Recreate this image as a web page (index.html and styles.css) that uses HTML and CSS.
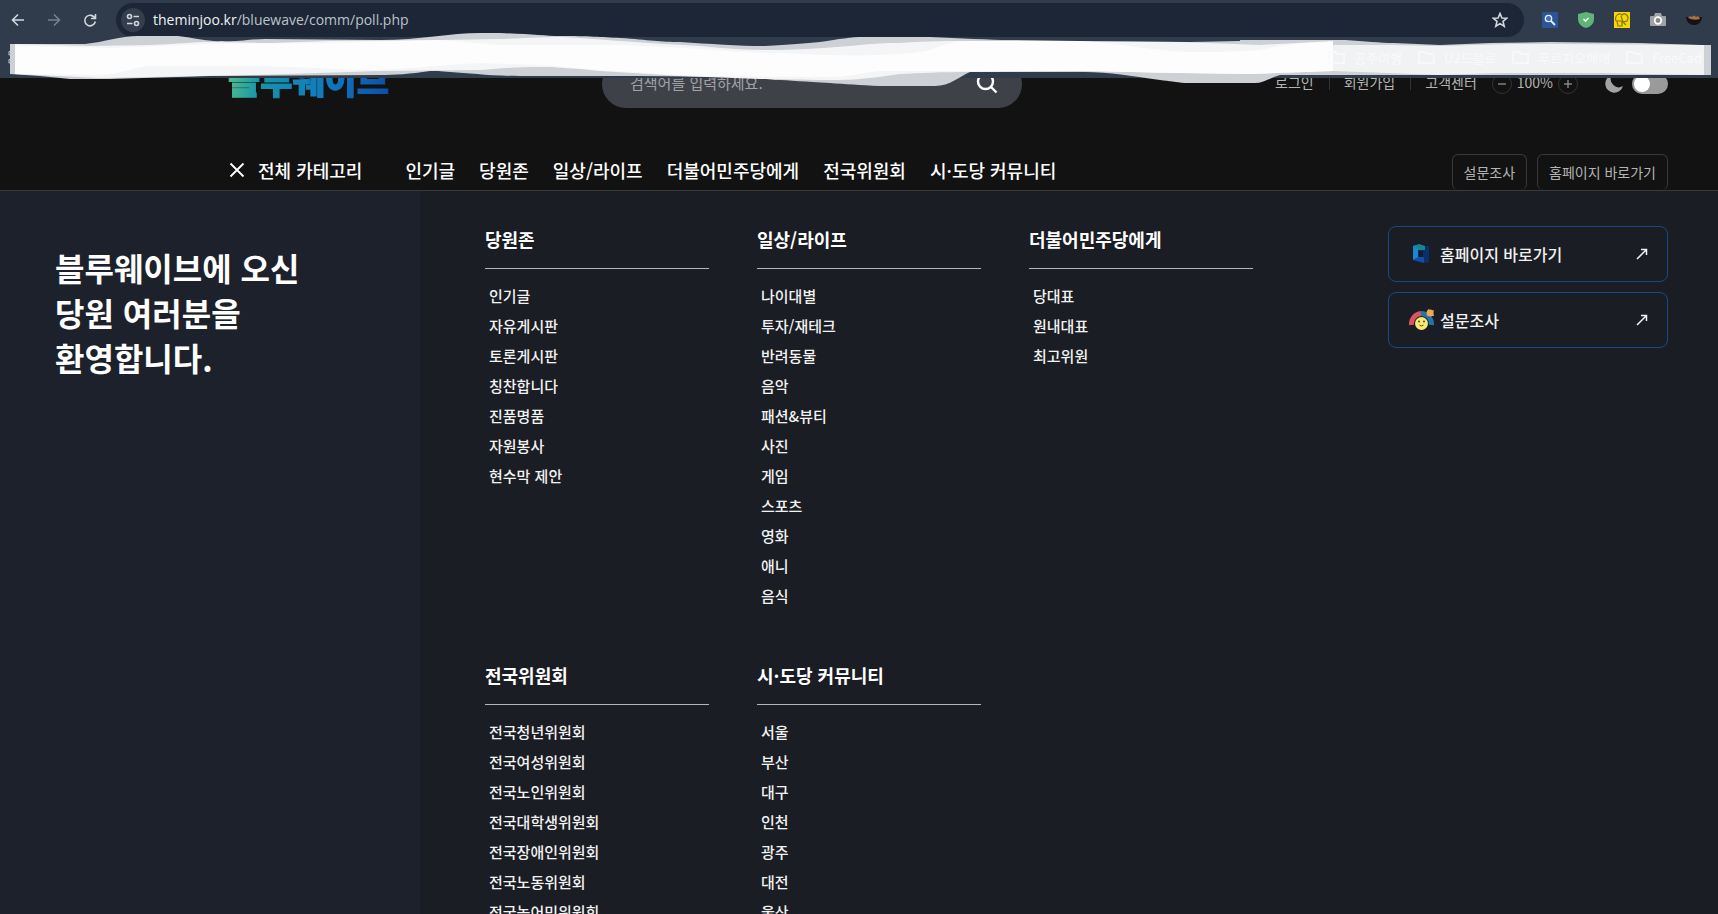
FILE: index.html
```html
<!DOCTYPE html>
<html lang="ko">
<head>
<meta charset="utf-8">
<title>블루웨이브</title>
<link rel="stylesheet" href="styles.css">
</head>
<body>
<div class="browser">
  <div class="toolbar">
    <div class="nav-buttons">
      <button class="tool" aria-label="뒤로"><svg width="16" height="16" viewBox="0 0 16 16"><path d="M14 8H3M8 2.500L2.500 8L8 13.500"/></svg></button>
      <button class="tool dim" aria-label="앞으로"><svg width="16" height="16" viewBox="0 0 16 16"><path d="M2 8H13M8 2.500L13.500 8L8 13.500"/></svg></button>
      <button class="tool" aria-label="새로고침"><svg width="16" height="16" viewBox="0 0 16 16"><path d="M13 6.500A5.300 5.300 0 1 0 13.300 9.500M13.500 2V6.500H9"/></svg></button>
    </div>
    <div class="address">
      <button class="site-info" aria-label="사이트 정보"><svg width="14" height="14" viewBox="0 0 14 14"><circle cx="3.500" cy="3.500" r="2"/><path d="M7.500 3.500H13M1 10.500H6.500"/><circle cx="10.500" cy="10.500" r="2"/></svg></button>
      <span class="url"><b>theminjoo.kr</b>/bluewave/comm/poll.php</span>
      <button class="tool star" aria-label="북마크"><svg width="16" height="16" viewBox="0 0 16 16"><path d="M8 1.500L9.900 6L14.700 6.300L11 9.400L12.200 14.200L8 11.600L3.800 14.200L5 9.400L1.300 6.300L6.100 6Z"/></svg></button>
    </div>
    <div class="extensions">
      <button class="ext" aria-label="검색 확장"><svg width="16" height="16" viewBox="0 0 16 16"><rect width="16" height="16" fill="#2d5499"/><circle cx="6.500" cy="6.500" r="3.200" fill="#3f6fb9" stroke="#e8eefa" stroke-width="1.300"/><path d="M9 9L13 13" stroke="#e8eefa" stroke-width="1.800"/></svg></button>
      <button class="ext" aria-label="보안 확장"><svg width="16" height="16" viewBox="0 0 16 16"><path d="M8 0L16 2V7C16 12 12 15 8 16C4 15 0 12 0 7V2Z" fill="#5fb578"/><path d="M5.500 7L7.500 9L10.500 6" fill="none" stroke="#fff" stroke-width="1.600"/></svg></button>
      <button class="ext" aria-label="노란색 확장"><svg width="16" height="16" viewBox="0 0 16 16"><rect width="16" height="16" fill="#f5d808"/><path d="M2 9C0 3 6 0 8 3C11 0 16 4 13 9L9 10L7 4M3 9H8V14H4ZM9 10L12 13" fill="none" stroke="#8a7508" stroke-width="1.200"/></svg></button>
      <button class="ext" aria-label="캡처"><svg width="16" height="16" viewBox="0 0 16 16"><path d="M1 4H4L5 1H11L12 4H15Q16 4 16 5V13Q16 14 15 14H1Q0 14 0 13V5Q0 4 1 4Z" fill="#a0a2a4"/><circle cx="8" cy="8.500" r="3.300" fill="#888" stroke="#fff" stroke-width="1.700"/></svg></button>
      <button class="ext" aria-label="그릇 확장"><svg width="16" height="16" viewBox="0 0 16 16"><path d="M0 5H16C15 11 12 13 8 13S1 11 0 5Z" fill="#161214"/><path d="M2 6Q4 3 6 5Q8 2 10 5Q13 3 14 7Q8 9 2 6Z" fill="#a5713f"/></svg></button>
    </div>
  </div>
  <svg class="brush" viewBox="0 0 1718 90" preserveAspectRatio="none" aria-hidden="true">
    <path fill="#cdd0d4" d="M10 44H85C105 42 120 36 138 36H178C195 38 210 42 222 41C240 42 250 39 265 39L380 40C420 40 450 33 480 33H500C530 34 545 36 560 36C590 36 600 37 620 38C650 40 660 42 680 42C710 44 740 46 765 46C790 45 805 43 820 42C840 39 850 37 865 37H930C960 38 990 40 1010 40L1080 41L1190 42L1240 41V40H1345C1365 41 1380 43 1394 43L1440 45L1490 43L1550 42L1640 43L1700 45H1711V75H1400L1280 75C1270 78 1263 83 1255 83H1185C1175 82 1170 81 1160 80C1130 76 1110 72 1085 72H970C960 76 950 86 935 86H880C860 85 845 84 830 83C805 82 790 80 775 80C760 78 750 77 740 77L640 76H520C490 76 470 73 450 72C440 71 435 71 430 71C410 74 395 75 380 75L210 76L110 79H70L40 76L10 74Z"/>
    <path fill="#f4f5f6" d="M15 44L90 46L150 45C180 44 190 42 210 42C230 42 250 43 270 43L330 41L440 40L500 39C530 38 545 37 560 37C590 38 600 40 620 41C650 43 680 45 700 46C740 50 755 50 780 50C820 49 830 47 850 46C880 43 885 43 900 43C930 41 950 41 970 41L1180 42L1260 45L1333 41V71L1250 74L1180 73C1150 73 1110 71 1080 71L970 72C940 72 920 73 900 74C870 78 860 80 830 80C800 80 780 79 760 79L680 76L600 71C570 68 555 67 540 67C510 67 500 69 480 70L380 71L250 75L100 78L15 74Z"/>
    <path fill="#fdfdfd" d="M15 46L110 48C140 47 180 45 210 44L330 43L440 40L500 45H620C650 46 680 48 700 49C740 52 755 53 780 53C820 55 850 56 880 55C910 54 920 52 930 50C945 44 955 41 970 41H1080C1120 43 1160 52 1190 52C1220 52 1230 52 1260 50C1280 45 1310 42 1333 42V71L1250 74L1180 73L1080 71H970H880C860 73 850 77 830 77L700 76C660 74 640 72 600 70L540 65L480 63C440 65 420 68 380 70C330 70 290 66 250 66H150C130 68 120 74 100 75L15 74Z"/>
    <path fill="#f1f2f4" d="M1333 45L1390 45L1440 46L1510 44L1560 44L1704 45V75L1600 73L1500 73L1440 75L1333 71Z"/>
  </svg>
  <svg class="apps-mark" width="6" height="16" viewBox="0 0 6 16" aria-hidden="true"><path d="M1 1.500H5V5H1ZM1 9.500H5V13H1Z" fill="none" stroke="#c8ccd2"/></svg>
  <nav class="bookmarks" aria-label="북마크바">
    <a href="#"><svg width="18" height="14" viewBox="0 0 18 14"><path d="M1 2H7L9 4H16V13H1Z"/></svg>공주여행</a>
    <a href="#"><svg width="18" height="14" viewBox="0 0 18 14"><path d="M1 2H7L9 4H16V13H1Z"/></svg>U2드블로</a>
    <a href="#"><svg width="18" height="14" viewBox="0 0 18 14"><path d="M1 2H7L9 4H16V13H1Z"/></svg>푸르지오매매</a>
    <a href="#"><svg width="18" height="14" viewBox="0 0 18 14"><path d="M1 2H7L9 4H16V13H1Z"/></svg>FreeCad</a>
  </nav>
</div>

<div class="page">
  <header class="header">
    <div class="header-top">
      <a class="logo" href="#">블루웨이브</a>
      <form class="search">
        <input type="text" aria-label="검색어" placeholder="검색어를 입력하세요.">
        <button type="button" aria-label="검색"><svg width="22" height="22" viewBox="0 0 22 22"><circle cx="9.500" cy="9.500" r="7.500"/><path d="M15 15L20.500 20.500"/></svg></button>
      </form>
      <div class="utils">
        <a href="#">로그인</a><a href="#">회원가입</a><a href="#">고객센터</a>
        <div class="scale">
          <button aria-label="축소"><svg width="10" height="10" viewBox="0 0 10 10"><path d="M1 5H9"/></svg></button>
          <span>100%</span>
          <button aria-label="확대"><svg width="10" height="10" viewBox="0 0 10 10"><path d="M1 5H9M5 1V9"/></svg></button>
        </div>
        <label class="theme">
          <svg width="20" height="20" viewBox="0 0 20 20"><path d="M8 1A9 9 0 1 0 19 12A8 8 0 0 1 8 1Z"/></svg>
          <input type="checkbox" aria-label="다크 모드">
        </label>
      </div>
    </div>
    <div class="header-nav">
      <button class="all"><svg width="16" height="16" viewBox="0 0 16 16"><path d="M1.500 1.500L14.500 14.500M14.500 1.500L1.500 14.500"/></svg>전체 카테고리</button>
      <nav class="menu">
        <a href="#">인기글</a><a href="#">당원존</a><a href="#">일상/라이프</a><a href="#">더불어민주당에게</a><a href="#">전국위원회</a><a href="#">시·도당 커뮤니티</a>
      </nav>
      <div class="quick"><a href="#">설문조사</a><a href="#">홈페이지 바로가기</a></div>
    </div>
  </header>

  <div class="panel">
    <aside class="welcome"><h1>블루웨이브에 오신<br>당원 여러분을<br>환영합니다.</h1></aside>
    <main class="content">
      <div class="groups">
        <section><h2>당원존</h2><ul>
          <li><a href="#">인기글</a></li><li><a href="#">자유게시판</a></li><li><a href="#">토론게시판</a></li><li><a href="#">칭찬합니다</a></li><li><a href="#">진품명품</a></li><li><a href="#">자원봉사</a></li><li><a href="#">현수막 제안</a></li>
        </ul></section>
        <section><h2>일상/라이프</h2><ul>
          <li><a href="#">나이대별</a></li><li><a href="#">투자/재테크</a></li><li><a href="#">반려동물</a></li><li><a href="#">음악</a></li><li><a href="#">패션&amp;뷰티</a></li><li><a href="#">사진</a></li><li><a href="#">게임</a></li><li><a href="#">스포츠</a></li><li><a href="#">영화</a></li><li><a href="#">애니</a></li><li><a href="#">음식</a></li>
        </ul></section>
        <section><h2>더불어민주당에게</h2><ul>
          <li><a href="#">당대표</a></li><li><a href="#">원내대표</a></li><li><a href="#">최고위원</a></li>
        </ul></section>
        <section><h2>전국위원회</h2><ul>
          <li><a href="#">전국청년위원회</a></li><li><a href="#">전국여성위원회</a></li><li><a href="#">전국노인위원회</a></li><li><a href="#">전국대학생위원회</a></li><li><a href="#">전국장애인위원회</a></li><li><a href="#">전국노동위원회</a></li><li><a href="#">전국농어민위원회</a></li>
        </ul></section>
        <section><h2>시·도당 커뮤니티</h2><ul>
          <li><a href="#">서울</a></li><li><a href="#">부산</a></li><li><a href="#">대구</a></li><li><a href="#">인천</a></li><li><a href="#">광주</a></li><li><a href="#">대전</a></li><li><a href="#">울산</a></li>
        </ul></section>
      </div>
      <div class="cards">
        <a class="card" href="#">
          <svg class="badge" width="26" height="24" viewBox="0 0 26 24"><path d="M4 4L20 4V20L16 21L4 18Z" fill="#0b2f6a"/><path d="M4 4L9 3V16L4 18Z" fill="#1c86cf"/><path d="M4 4L10 2L16 4V8H9V6Z" fill="#1b8390"/><path d="M4 18L9 15H15V21Z" fill="#124fa3"/><path d="M10 9H14V15H10Z" fill="#141c2c"/></svg>
          <span>홈페이지 바로가기</span>
          <svg class="arrow" width="12" height="12" viewBox="0 0 12 12"><path d="M1 11L10.500 1.500M5 1.500H10.500V7"/></svg>
        </a>
        <a class="card" href="#">
          <svg class="badge" width="26" height="24" viewBox="0 0 26 24"><path d="M2.500 17A10.500 10.500 0 0 1 12 5.500" fill="none" stroke="#d95560" stroke-width="5"/><path d="M12 5.500A10.500 10.500 0 0 1 22.500 17" fill="none" stroke="#2273ae" stroke-width="5"/><circle cx="21" cy="5" r="3.500" fill="#f0a94c"/><path d="M18 6L19 1L22 3L25 2L24 5L25 8L21 8Z" fill="#f0a94c"/><circle cx="12.500" cy="15.500" r="6.500" fill="#f8ea70"/><circle cx="10" cy="13.500" r="1" fill="#5a4a20"/><circle cx="15" cy="13.500" r="1" fill="#5a4a20"/><path d="M10.500 17Q12.500 19 14.500 17" fill="none" stroke="#5a4a20"/></svg>
          <span>설문조사</span>
          <svg class="arrow" width="12" height="12" viewBox="0 0 12 12"><path d="M1 11L10.500 1.500M5 1.500H10.500V7"/></svg>
        </a>
      </div>
    </main>
  </div>
</div>
</body>
</html>
```
FILE: styles.css
```css
* { box-sizing: border-box; }
body {
  margin: 0;
  height: 100vh;
  display: flex;
  flex-direction: column;
  overflow: hidden;
  background: #121212;
  color: #fff;
  font-family: "Noto Sans CJK KR", "Noto Sans", sans-serif;
}
a { color: inherit; text-decoration: none; }
button { margin: 0; padding: 0; border: 0; background: none; color: inherit; font: inherit; display: flex; align-items: center; justify-content: center; }
h1, h2, ul { margin: 0; padding: 0; }
ul { list-style: none; }

.browser { position: relative; z-index: 1; flex: none; height: 78px; background: #303b4b; }
.toolbar { display: flex; align-items: center; height: 40px; padding: 0 16px 0 10px; }
.nav-buttons { display: flex; gap: 20px; margin-right: 18px; }
.tool { width: 16px; height: 16px; }
.tool svg, .site-info svg { fill: none; stroke: #d3d8df; stroke-width: 1.6; }
.tool.dim svg { stroke: #768090; }
.address { flex: 1; display: flex; align-items: center; height: 34px; padding: 0 16px 0 5px; border-radius: 17px; background: #1d2636; }
.site-info { width: 24px; height: 24px; border-radius: 50%; background: #343e4d; }
.url { flex: 1; margin-left: 8px; font: 14px/20px "Open Sans", sans-serif; color: #bcc3cd; }
.url b { font-weight: 400; color: #f0f2f5; }
.extensions { display: flex; gap: 20px; margin-left: 18px; }
.ext { width: 16px; height: 16px; }

.brush { position: absolute; left: 0; top: 0; width: 100%; height: 90px; pointer-events: none; }
.apps-mark { position: absolute; left: 8px; top: 50px; }
.bookmarks { position: relative; display: flex; justify-content: flex-end; gap: 16px; height: 34px; align-items: center; padding-right: 16px; font-size: 13px; color: #fafafa; }
.bookmarks a { display: flex; align-items: center; gap: 8px; }
.bookmarks svg { fill: none; stroke: #fafafa; stroke-width: 1.5; }

.page { flex: 1; min-height: 0; display: flex; flex-direction: column; overflow: hidden; }
.header { flex: none; margin-top: -18px; padding: 0 50px 0 228px; border-bottom: 1px solid #393939; }
.header-top { display: flex; align-items: center; height: 48px; }
.logo { padding-bottom: 10px; font-size: 35px; line-height: 44px; font-weight: 900; background: linear-gradient(100deg, #59c08a 0%, #1594a8 22%, #1279bd 60%, #0d4da6 100%); background-clip: text; color: transparent; -webkit-text-stroke: 1px transparent; }
.search { display: flex; align-items: center; width: 420px; height: 48px; margin-left: 213px; padding: 0 24px 2px 28px; border-radius: 24px; background: #3f4149; }
.search input { flex: 1; min-width: 0; padding: 0; border: 0; background: none; color: #fff; font: 15px/24px "Noto Sans CJK KR", sans-serif; }
.search input::placeholder { color: #a0a1a5; opacity: 1; }
.search svg { fill: none; stroke: #fff; stroke-width: 2.4; }
.utils { display: flex; align-items: center; margin-left: auto; font-size: 14px; line-height: 20px; color: #b4b4b4; }
.utils > a, .scale span { padding-bottom: 5px; }
.utils > a + a { margin-left: 15px; padding-left: 15px; background: linear-gradient(#333, #333) left center / 1px 12px no-repeat; }
.scale { display: flex; align-items: center; gap: 5px; margin-left: 15px; }
.scale button { width: 20px; height: 20px; border: 1px solid #333; border-radius: 50%; }
.scale svg { fill: none; stroke: #b4b4b4; }
.theme { display: flex; align-items: center; gap: 8px; margin-left: 26px; }
.theme svg { fill: #a3a3a3; }
.theme input { appearance: none; width: 36px; height: 20px; margin: 0; padding: 2px; border-radius: 10px; background: #9a9a9a; }
.theme input::before { content: ""; display: block; width: 16px; height: 16px; border-radius: 50%; background: #fff; }

.header-nav { display: flex; align-items: flex-end; height: 82px; font-size: 18px; font-weight: 500; line-height: 40px; }
.all { gap: 13px; padding-left: 1px; }
.all svg { fill: none; stroke: #fff; stroke-width: 1.8; }
.menu { display: flex; gap: 24px; margin-left: 43px; }
.quick { display: flex; gap: 10px; margin-left: auto; height: 36px; }
.quick a { padding: 0 11px; border: 1px solid #393939; border-bottom: 0; border-radius: 6px; font-size: 14px; font-weight: 400; line-height: 34px; color: #b4b4b4; }

.panel { flex: 1; min-height: 0; display: grid; grid-template-columns: 420px 1fr; background: #1a1d23; }
.welcome { padding: 54px 24px 0 55px; background: #1d212b; }
.welcome h1 { font-size: 32px; line-height: 45px; font-weight: 700; }
.content { display: flex; justify-content: space-between; align-items: flex-start; min-height: 0; padding: 35px 50px 0 65px; overflow: hidden; }
.groups { display: grid; grid-template-columns: repeat(3, 224px); gap: 51px 48px; }
.groups h2 { padding-bottom: 16px; border-bottom: 1px solid #b5b6b8; font-size: 18px; line-height: 26px; font-weight: 700; }
.groups ul { padding: 12px 4px 0; }
.groups li { font-size: 15px; line-height: 30px; font-weight: 500; color: #f2f2f2; }
.cards { display: grid; gap: 10px; width: 280px; }
.card { display: flex; align-items: center; height: 56px; padding: 0 19px 0 20px; border: 1px solid #174a80; border-radius: 8px; font-size: 16px; font-weight: 500; color: #f2f2f2; }
.card span { flex: 1; margin-left: 5px; }
.arrow { fill: none; stroke: #f2f2f2; stroke-width: 1.5; }
```
